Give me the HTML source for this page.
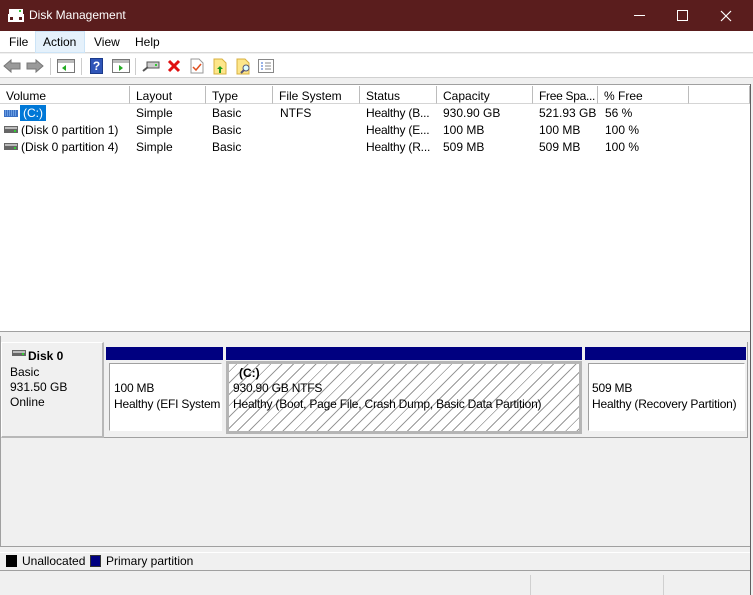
<!DOCTYPE html>
<html><head><style>
*{margin:0;padding:0;box-sizing:border-box}
body{width:753px;height:595px;position:relative;overflow:hidden;background:#f0f0f0;font-family:"Liberation Sans",Arial,sans-serif;font-size:12px;color:#000}
.a{position:absolute}
.title{left:0;top:0;width:753px;height:31px;background:#5a1d1d;color:#fff}
.menu{left:0;top:31px;width:753px;height:22px;background:#fff;border-bottom:1px solid #d8d8d8}
.menu span{position:absolute;top:4px}
.tb{left:0;top:54px;width:753px;height:24px;background:#fff;border-bottom:1px solid #d0d0d0}
.list{left:0;top:84px;width:750px;height:246px;background:#fff;border-top:1px solid #a0a0a0}
.hd{position:absolute;top:1px;height:18px;background:#fff;border-right:1px solid #bcbcbc;border-bottom:1px solid #d5d5d5;padding:3px 0 0 6px;font-size:12px;white-space:nowrap;overflow:hidden}
.r{position:absolute;font-size:12px;white-space:nowrap}
.bar{background:#000080;height:13px;top:347px}
.pbox{background:#fff;border:1px solid #a0a0a0}
.txt{position:absolute;font-size:12px;white-space:nowrap}
.pt{letter-spacing:-0.2px}
</style></head><body>
<div class="a title">
 <svg class="a" style="left:7px;top:8px" width="18" height="16"><rect x="2" y="1" width="14" height="5" fill="#fff"/><rect x="1" y="6" width="16" height="8" fill="#fff"/><rect x="3" y="9" width="3" height="3" fill="#5a1d1d"/><rect x="12" y="9" width="3" height="3" fill="#5a1d1d"/><rect x="12" y="2" width="2" height="2" fill="#3c3"/></svg>
 <span class="a" style="left:29px;top:8px;font-size:12px">Disk Management</span>
 <div class="a" style="left:634px;top:15px;width:11px;height:1px;background:#fff"></div>
 <div class="a" style="left:677px;top:10px;width:11px;height:11px;border:1px solid #fff"></div>
 <svg class="a" style="left:720px;top:10px" width="12" height="12"><path d="M1 1L11 11M11 1L1 11" stroke="#fff" stroke-width="1.2"/></svg>
</div>
<div class="a menu">
 <span style="left:9px">File</span>
 <div class="a" style="left:35px;top:0;width:50px;height:22px;background:#e5f1fb;border:1px solid #cce4f7"></div>
 <span style="left:43px">Action</span>
 <span style="left:94px">View</span>
 <span style="left:135px">Help</span>
</div>
<div class="a tb">
 <svg class="a" style="left:3px;top:4px" width="42" height="16"><path d="M1 8L8 2V5H17V11H8V14Z" fill="#9a9a9a" stroke="#777"/><path d="M40 8L33 2V5H24V11H33V14Z" fill="#9a9a9a" stroke="#777"/></svg>
 <div class="a" style="left:50px;top:4px;width:1px;height:17px;background:#ccc"></div>
 <svg class="a" style="left:57px;top:5px" width="18" height="14"><rect x="0.5" y="0.5" width="17" height="13" fill="#fff" stroke="#777"/><rect x="1" y="1" width="16" height="3" fill="#bbb"/><path d="M5 9L9 6V12Z" fill="#2a2"/></svg>
 <div class="a" style="left:81px;top:4px;width:1px;height:17px;background:#ccc"></div>
 <div class="a" style="left:90px;top:4px;width:13px;height:16px;background:#2f55b8;border:1px solid #1b3a8a;color:#fff;font-weight:bold;font-size:12px;text-align:center;line-height:14px">?</div>
 <svg class="a" style="left:112px;top:5px" width="18" height="14"><rect x="0.5" y="0.5" width="17" height="13" fill="#fff" stroke="#777"/><rect x="1" y="1" width="16" height="3" fill="#bbb"/><path d="M7 6L11 9L7 12Z" fill="#2a2"/></svg>
 <div class="a" style="left:135px;top:4px;width:1px;height:17px;background:#ccc"></div>
 <svg class="a" style="left:142px;top:6px" width="18" height="12"><rect x="5" y="2" width="12" height="6" fill="#ccc" stroke="#555"/><rect x="13" y="4" width="2" height="2" fill="#3c3"/><path d="M1 11L6 7" stroke="#555" stroke-width="2"/></svg>
 <svg class="a" style="left:167px;top:5px" width="14" height="14"><path d="M2 2L12 12M12 2L2 12" stroke="#e01010" stroke-width="3"/></svg>
 <svg class="a" style="left:190px;top:4px" width="14" height="16"><path d="M1 1H9L13 5V15H1Z" fill="#fff" stroke="#999"/><path d="M3 9L6 12L11 6" stroke="#e05020" fill="none" stroke-width="1.5"/></svg>
 <svg class="a" style="left:213px;top:4px" width="14" height="17"><path d="M1 1H9L13 5V16H1Z" fill="#fde68a" stroke="#d8b040"/><path d="M7 8L4 11H6V15H8V11H10Z" fill="#1a9a1a"/></svg>
 <svg class="a" style="left:236px;top:4px" width="16" height="17"><path d="M1 1H9L13 5V16H1Z" fill="#fde68a" stroke="#d8b040"/><circle cx="10" cy="10" r="3" fill="#dff" stroke="#557"/><path d="M8 12L5 15" stroke="#557" stroke-width="2"/></svg>
 <svg class="a" style="left:258px;top:5px" width="16" height="14"><rect x="0.5" y="0.5" width="15" height="13" fill="#fff" stroke="#888"/><path d="M3 4H5M3 7H5M3 10H5" stroke="#36c"/><path d="M7 4H13M7 7H13M7 10H13" stroke="#888"/></svg>
</div>
<div class="a list">
 <div class="hd" style="left:0;width:130px">Volume</div>
 <div class="hd" style="left:130px;width:76px">Layout</div>
 <div class="hd" style="left:206px;width:67px">Type</div>
 <div class="hd" style="left:273px;width:87px">File System</div>
 <div class="hd" style="left:360px;width:77px">Status</div>
 <div class="hd" style="left:437px;width:96px">Capacity</div>
 <div class="hd" style="left:533px;width:65px;letter-spacing:-0.3px">Free Spa...</div>
 <div class="hd" style="left:598px;width:91px">% Free</div>
 <div class="hd" style="left:689px;width:61px"></div>
 <svg class="a" style="left:4px;top:25px" width="14" height="7"><rect width="14" height="7" fill="#3a6fc4"/><path d="M1 1H13M1 3H13M1 5H13" stroke="#9cf" stroke-dasharray="1 1"/></svg>
 <div class="a" style="left:20px;top:20px;width:26px;height:16px;background:#0078d7"></div>
 <div class="r" style="left:23px;top:21px;color:#fff">(C:)</div>
 <svg class="a" style="left:4px;top:41px" width="14" height="7"><rect width="14" height="7" fill="#666"/><rect x="1" y="1" width="12" height="2" fill="#bbb"/><rect x="10" y="4" width="2" height="2" fill="#3c3"/></svg>
 <svg class="a" style="left:4px;top:58px" width="14" height="7"><rect width="14" height="7" fill="#666"/><rect x="1" y="1" width="12" height="2" fill="#bbb"/><rect x="10" y="4" width="2" height="2" fill="#3c3"/></svg>
 <div class="r" style="left:21px;top:38px">(Disk 0 partition 1)</div>
 <div class="r" style="left:21px;top:55px">(Disk 0 partition 4)</div>
 <div class="r" style="left:136px;top:21px">Simple</div><div class="r" style="left:136px;top:38px">Simple</div><div class="r" style="left:136px;top:55px">Simple</div>
 <div class="r" style="left:212px;top:21px">Basic</div><div class="r" style="left:212px;top:38px">Basic</div><div class="r" style="left:212px;top:55px">Basic</div>
 <div class="r" style="left:280px;top:21px">NTFS</div>
 <div class="r pt" style="left:366px;top:21px">Healthy (B...</div><div class="r pt" style="left:366px;top:38px">Healthy (E...</div><div class="r pt" style="left:366px;top:55px">Healthy (R...</div>
 <div class="r" style="left:443px;top:21px">930.90 GB</div><div class="r" style="left:443px;top:38px">100 MB</div><div class="r" style="left:443px;top:55px">509 MB</div>
 <div class="r" style="left:539px;top:21px">521.93 GB</div><div class="r" style="left:539px;top:38px">100 MB</div><div class="r" style="left:539px;top:55px">509 MB</div>
 <div class="r" style="left:605px;top:21px">56 %</div><div class="r" style="left:605px;top:38px">100 %</div><div class="r" style="left:605px;top:55px">100 %</div>
</div>
<div class="a" style="left:0;top:329px;width:750px;height:3px;border-bottom:1px solid #a0a0a0;background:#fff"></div>
<div class="a" style="left:750px;top:84px;width:3px;height:511px;background:#f0f0f0;border-left:1px solid #606060"></div>
<div class="a" style="left:0;top:336px;width:750px;height:211px;background:#f0f0f0;border-bottom:1px solid #a0a0a0;border-left:1px solid #a0a0a0"></div>
<div class="a" style="left:1px;top:342px;width:103px;height:96px;background:#f0f0f0;border:1px solid #fff;border-right:2px solid #b8b8b8;border-bottom:2px solid #b8b8b8"></div>
<svg class="a" style="left:12px;top:350px" width="14" height="6"><rect width="14" height="6" fill="#666"/><rect x="1" y="1" width="12" height="2" fill="#bbb"/><rect x="10" y="3" width="2" height="2" fill="#3c3"/></svg>
<div class="txt" style="left:28px;top:349px;font-weight:bold">Disk 0</div>
<div class="txt" style="left:10px;top:365px">Basic</div>
<div class="txt" style="left:10px;top:380px">931.50 GB</div>
<div class="txt" style="left:10px;top:395px">Online</div>
<div class="a" style="left:104px;top:342px;width:644px;height:96px;border-bottom:1px solid #a0a0a0;border-right:1px solid #a0a0a0"></div>
<div class="a bar" style="left:106px;width:117px"></div>
<div class="a bar" style="left:226px;width:356px"></div>
<div class="a bar" style="left:585px;width:161px"></div>
<div class="a" style="left:106px;top:361px;width:117px;height:73px;background:#f0f0f0"></div>
<div class="a pbox" style="left:109px;top:363px;width:113px;height:68px;border-right-color:#fff;border-bottom-color:#fff"></div>
<div class="a" style="left:226px;top:361px;width:356px;height:73px;background:#b5b5b5"></div>
<div class="a" style="left:229px;top:364px;width:350px;height:67px;background:#fff repeating-linear-gradient(135deg,#fff 0 5px,#999 5px 6px,#fff 6px 8px)"></div>
<div class="a pbox" style="left:588px;top:363px;width:157px;height:68px;border-right-color:#fff;border-bottom-color:#fff"></div>
<div class="txt pt" style="left:114px;top:381px">100 MB</div>
<div class="txt pt" style="left:114px;top:397px">Healthy (EFI System</div>
<div class="txt" style="left:239px;top:366px;font-weight:bold">(C:)</div>
<div class="txt pt" style="left:233px;top:381px">930.90 GB NTFS</div>
<div class="txt pt" style="left:233px;top:397px">Healthy (Boot, Page File, Crash Dump, Basic Data Partition)</div>
<div class="txt pt" style="left:592px;top:381px">509 MB</div>
<div class="txt pt" style="left:592px;top:397px">Healthy (Recovery Partition)</div>
<div class="a" style="left:0;top:552px;width:750px;height:19px;border-top:1px solid #fff;border-bottom:1px solid #a0a0a0"></div>
<div class="a" style="left:6px;top:555px;width:11px;height:12px;background:#000"></div>
<div class="txt" style="left:22px;top:554px">Unallocated</div>
<div class="a" style="left:90px;top:555px;width:11px;height:12px;background:#000080;border:1px solid #333"></div>
<div class="txt" style="left:106px;top:554px">Primary partition</div>
<div class="a" style="left:530px;top:575px;width:1px;height:20px;background:#d0d0d0"></div>
<div class="a" style="left:663px;top:575px;width:1px;height:20px;background:#d0d0d0"></div>
</body></html>
